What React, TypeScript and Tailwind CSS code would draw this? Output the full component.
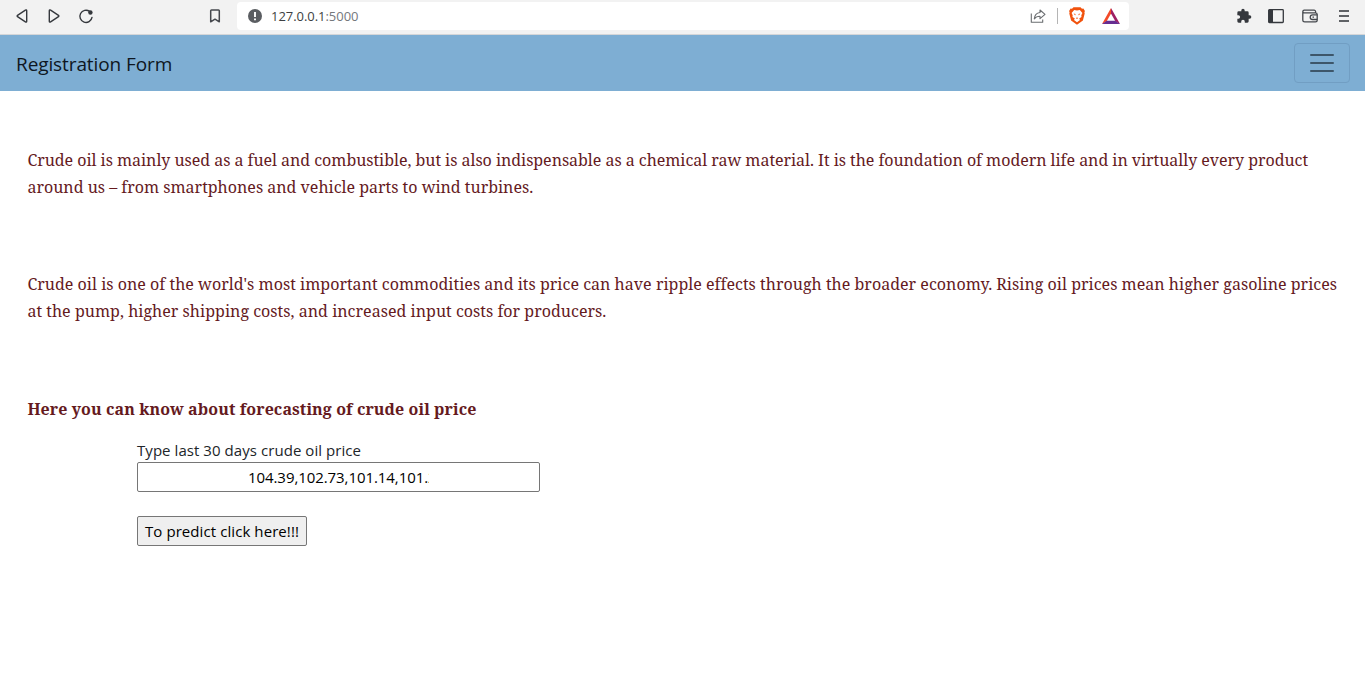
const serif = "font-['Noto_Serif','DejaVu_Serif_Condensed',serif]";
const sans = "font-['Open_Sans','Noto_Sans',sans-serif]";

function BrowserBar() {
  return (
    <header className="flex h-[35px] items-start border-b border-[#d5d6d8] bg-[#f2f2f2] text-[#3b3e4f]">
      <div className="flex h-8 w-[237px] shrink-0 items-center pl-[14px]">
        <svg className="mr-4 size-4" viewBox="0 0 16 16" fill="none" stroke="#35383d" strokeWidth="1.4" strokeLinejoin="round">
          <path d="M12.7 2.7v10.6c0 .8-.7 1-1.3.6L3.5 8.7a.9.9 0 0 1 0-1.4l7.9-5.2c.6-.4 1.3-.2 1.3.6Z" />
        </svg>
        <svg className="mr-4 size-4" viewBox="0 0 16 16" fill="none" stroke="#35383d" strokeWidth="1.4" strokeLinejoin="round">
          <path d="M3.3 2.7v10.6c0 .8.7 1 1.3.6l7.9-5.2a.9.9 0 0 0 0-1.4L4.6 2.1c-.6-.4-1.3-.2-1.3.6Z" />
        </svg>
        <svg className="mr-[113px] size-4" viewBox="0 0 16 16" fill="none" stroke="#35383d" strokeWidth="1.4" strokeLinecap="round">
          <path d="M11.6 3.4A6.1 6.1 0 1 0 14 9.4" />
          <circle cx="12.4" cy="4.5" r="2.2" fill="#35383d" stroke="none" />
        </svg>
        <svg className="size-4" viewBox="0 0 16 16" fill="none" stroke="#45484d" strokeWidth="1.5" strokeLinejoin="round">
          <path d="M3.7 2.8c0-.5.3-.8.8-.8h7c.5 0 .8.3.8.8v11L8 11.2l-4.3 2.6Z" />
        </svg>
      </div>
      <div className="mt-[2px] flex h-7 w-[892px] shrink-0 items-center rounded bg-white pl-[11px]">
        <svg className="size-[14px]" viewBox="0 0 14 14">
          <circle cx="7" cy="7" r="7" fill="#5a5d61" />
          <path d="M7 3v5M7 9.6v1.7" stroke="#fff" strokeWidth="1.9" />
        </svg>
        <span className={`${sans} ml-[9px] pt-[2px] text-[13px] tracking-[-0.04px] text-[#3d3f42]`}>
          127.0.0.1<span className="text-[#75787c]">:5000</span>
        </span>
        <div className="ml-auto flex items-center pr-[9px]">
          <svg className="size-4" viewBox="0 0 16 16" fill="none" stroke="#6a6d70" strokeWidth="1.1" strokeLinejoin="round">
            <path d="M1.3 5.5v8.7h11.4v-2.7" />
            <path d="M10 2l5 4.4-5 4.3V8.3c-2.7 0-4.5.8-5.7 2.6C4.6 7.3 6.5 4.9 10 4.5Z" />
          </svg>
          <div className="ml-[11px] h-4 w-px bg-[#b5b5b5]" />
          <svg className="ml-[10px] h-[18px] w-[18px]" viewBox="0 0 18 18">
            <path d="M5.5.2h7l1.500 1.500 1.400-.1 1.500 2.300-.5 1.500.3 1-1.800 7.200L9 17.800l-5.900-4.200-1.800-7.200.3-1-.5-1.500 1.500-2.300 1.400.1Z" fill="#f1520d" />
            <path d="M6.200 3.100 9 3.600l2.800-.5 2.600 3-1.100 2.200.2 1.700-2.300 1.500.8 1.400L9 15.200l-3-2.300.8-1.400L4.500 10l.2-1.700-1.100-2.200Z" fill="#fff" />
            <path d="m5.600 6.600 2 .4-.4 1.500ZM12.400 6.600l-2 .4.4 1.500ZM7.800 11.100l1.200-.6 1.200.6-1.200 1Z" fill="#f1520d" />
          </svg>
          <svg className="ml-4 h-[18px] w-[18px]" viewBox="0 0 18 18">
            <path d="M9 1 0 17l4.700-2.800L9 6.500Z" fill="#f34a28" />
            <path d="m9 1 9 16-4.700-2.800L9 6.500Z" fill="#9e1f63" />
            <path d="m0 17 4.700-3.200h8.600L18 17Z" fill="#662d91" />
          </svg>
        </div>
      </div>
      <div className="ml-auto flex h-8 items-center pr-4">
        <svg className="mr-4 size-4" viewBox="0 0 24 24" fill="#35383d">
          <path d="M20.500 11H19V7a2 2 0 0 0-2-2h-4V3.500a2.500 2.500 0 0 0-5 0V5H4a2 2 0 0 0-2 2v3.800h1.500a2.700 2.700 0 0 1 0 5.400H2V20a2 2 0 0 0 2 2h3.800v-1.500a2.700 2.700 0 0 1 5.400 0V22H17a2 2 0 0 0 2-2v-4h1.500a2.500 2.500 0 0 0 0-5Z" />
        </svg>
        <svg className="mr-[18px] size-4" viewBox="0 0 16 16">
          <rect x=".7" y="1.700" width="14.600" height="12.800" rx=".8" fill="none" stroke="#35383d" strokeWidth="1.300" />
          <path d="M.7 1.700H5v12.800H.7Z" fill="#35383d" />
        </svg>
        <svg className="mr-[21px] size-4" viewBox="0 0 16 16" fill="none" stroke="#45484d" strokeWidth="1.300" strokeLinejoin="round">
          <path d="M13.600 5.200V3.700a1.500 1.500 0 0 0-1.500-1.500H2.200C.4 2.200.4 4.900 2.200 4.900h11.100c1.100 0 1.900.7 1.900 1.700v5.600c0 1-.8 1.700-1.700 1.700H2.700c-1.100 0-1.900-.7-1.900-1.700V3.600" />
          <path d="M15.200 6.900h-4.700a2.200 2.200 0 0 0 0 4.600h4.700M10.500 9.200h1.500" />
        </svg>
        <div className="flex w-[10px] flex-col gap-[3px]">
          <div className="h-[2px] bg-[#606266]" />
          <div className="h-[2px] bg-[#606266]" />
          <div className="h-[2px] bg-[#606266]" />
        </div>
      </div>
    </header>
  );
}

function Navbar() {
  return (
    <nav className="flex h-14 items-center justify-between bg-[#7eaed3] pr-[15px] pl-4">
      <span className={`${sans} pt-[2px] text-[19px] tracking-[-0.1px] text-[#0e1722]`}>Registration Form</span>
      <button className="flex h-10 w-14 flex-col items-center justify-center gap-[6px] rounded border border-[#719ec3]" aria-label="Toggle navigation">
        <span className="h-[2px] w-6 rounded-full bg-[#3d566a]" />
        <span className="h-[2px] w-6 rounded-full bg-[#3d566a]" />
        <span className="h-[2px] w-6 rounded-full bg-[#3d566a]" />
      </button>
    </nav>
  );
}

export default function App() {
  return (
    <div className="h-[684px] overflow-hidden bg-white">
      <BrowserBar />
      <Navbar />
      <main className={`${serif} pt-14 pl-[27.4px] text-[16px] leading-[27px] whitespace-nowrap text-[#651a1e]`}>
        <p className="mb-[70px]">
          <span className="block tracking-[-0.036px]">
            Crude oil is mainly used as a fuel and combustible, but is also indispensable as a chemical raw material. It is the foundation of modern life and in virtually every product
          </span>
          <span className="block">around us – from smartphones and vehicle parts to wind turbines.</span>
        </p>
        <p className="mb-[71px]">
          <span className="block tracking-[0.024px]">
            Crude oil is one of the world's most important commodities and its price can have ripple effects through the broader economy. Rising oil prices mean higher gasoline prices
          </span>
          <span className="block tracking-[0.026px]">at the pump, higher shipping costs, and increased input costs for producers.</span>
        </p>
        <h1 className="font-bold tracking-[0.08px]">Here you can know about forecasting of crude oil price</h1>
        <form className={`${sans} mt-[15px] ml-[109.6px] flex flex-col items-start text-[15px] leading-6 text-[#212529]`} onSubmit={(e) => e.preventDefault()}>
          <label htmlFor="prices" className="tracking-[0.06px]">Type last 30 days crude oil price</label>
          <input
            id="prices"
            className="h-[30px] w-[403px] rounded-[2px] border border-[#767676] bg-white pr-[110px] pl-[110px] tracking-[-0.07px] text-black"
            defaultValue="104.39,102.73,101.14,101.2"
          />
          <button className="mt-6 h-[30px] w-[170px] rounded-[2px] border border-[#767676] bg-[#efefef] text-center tracking-[0.08px] text-black">
            To predict click here!!!
          </button>
        </form>
      </main>
    </div>
  );
}
